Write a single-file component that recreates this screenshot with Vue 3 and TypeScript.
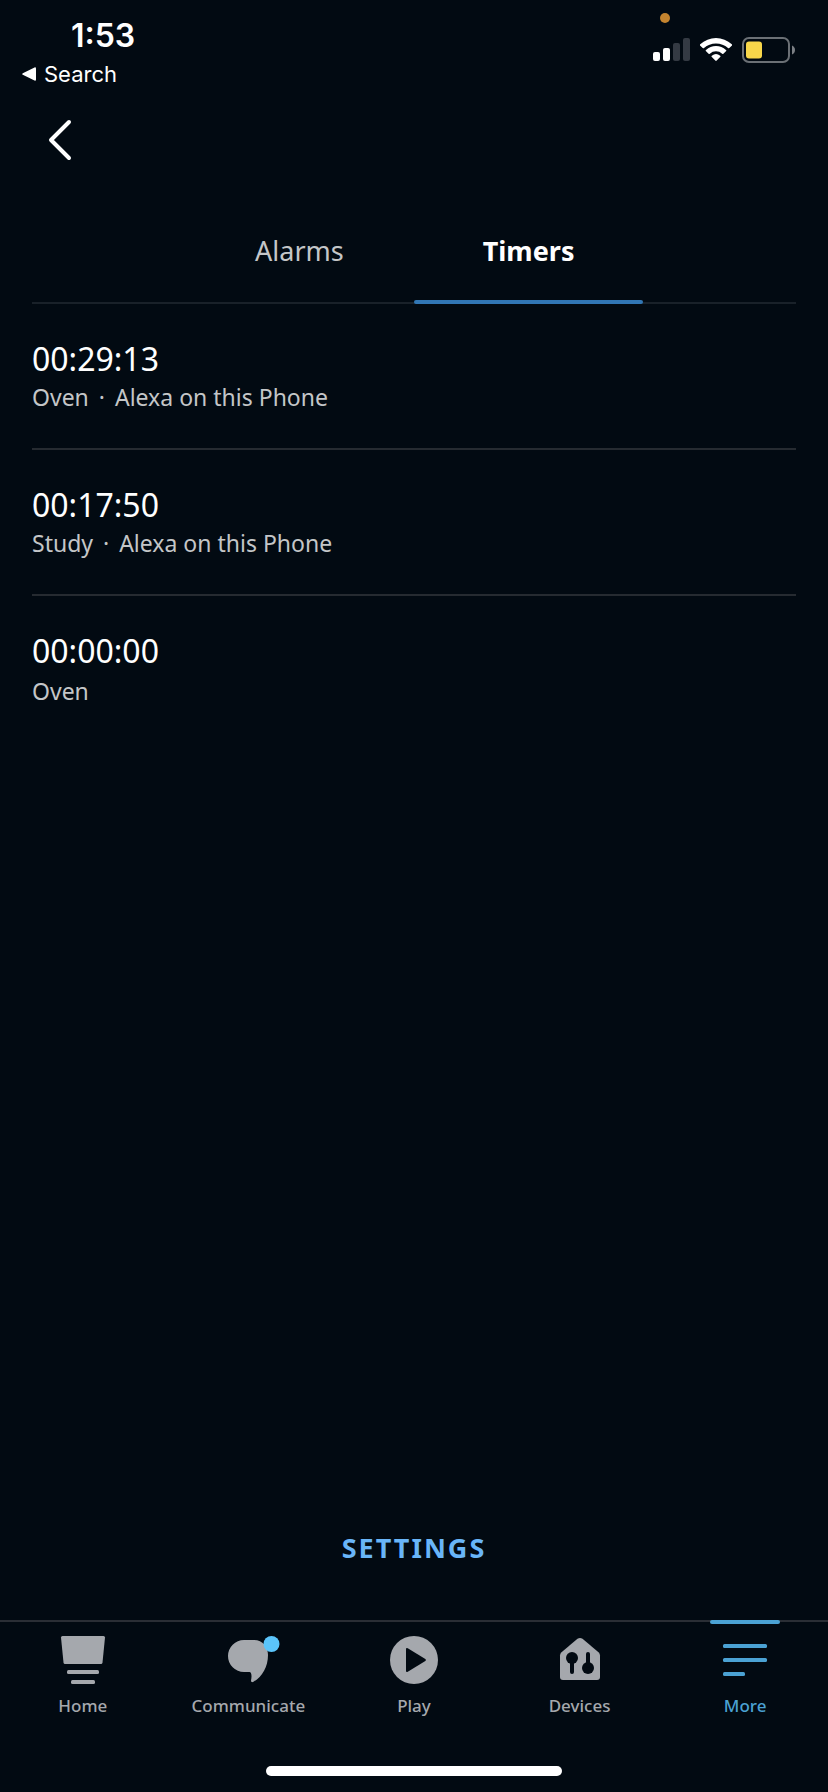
<script setup lang="ts">
import { ref } from 'vue'

interface Timer {
  id: number
  remaining: string
  name: string
  device?: string
}

type NavIcon = 'home' | 'communicate' | 'play' | 'devices' | 'more'

const tabs = ['Alarms', 'Timers']
const activeTab = ref('Timers')

const timers: Timer[] = [
  { id: 1, remaining: '00:29:13', name: 'Oven', device: 'Alexa on this Phone' },
  { id: 2, remaining: '00:17:50', name: 'Study', device: 'Alexa on this Phone' },
  { id: 3, remaining: '00:00:00', name: 'Oven' },
]

const navItems: { label: string; icon: NavIcon }[] = [
  { label: 'Home', icon: 'home' },
  { label: 'Communicate', icon: 'communicate' },
  { label: 'Play', icon: 'play' },
  { label: 'Devices', icon: 'devices' },
  { label: 'More', icon: 'more' },
]
const activeNav = ref('More')
</script>

<template>
  <div class="screen">
    <header class="status">
      <div class="status-left">
        <span class="clock">1:53</span>
        <a class="return" href="#">
          <svg width="14" height="14" viewBox="0 0 14 14" aria-hidden="true">
            <path d="M12.5 .4Q14 0 14 1.5V12.5Q14 14 12.5 13.6L.8 7.8Q-.4 7 .8 6.2Z" fill="#fff" />
          </svg>
          Search
        </a>
      </div>
      <div class="status-right">
        <span class="mic-dot"></span>
        <div class="indicators">
          <svg width="37" height="24" viewBox="0 0 37 24" aria-label="Signal">
            <rect x="0" y="14" width="7" height="9" rx="2" fill="#fff" />
            <rect x="10" y="10" width="7" height="13" rx="2" fill="#fff" />
            <rect x="20" y="5" width="7" height="18" rx="2" fill="#343a43" />
            <rect x="30" y="0" width="7" height="23" rx="2" fill="#343a43" />
          </svg>
          <svg width="32" height="24" viewBox="0 0 32 24" aria-label="Wi-Fi">
            <path d="M0 7.4Q-.4 6.8.2 6.3A23 23 0 0 1 31.8 6.3Q32.4 6.8 32 7.4L29.3 10.1Q28.6 10.6 28 10.1A17.8 17.8 0 0 0 4 10.1Q3.4 10.6 2.7 10.1Z" fill="#fff" />
            <path d="M5.8 13Q5.3 12.4 6 11.9A14.8 14.8 0 0 1 26 11.9Q26.7 12.4 26.2 13L23.4 15.7Q22.8 16.2 22.2 15.7A9.4 9.4 0 0 0 9.8 15.7Q9.2 16.2 8.6 15.7Z" fill="#fff" />
            <path d="M11.6 18.8Q11.1 18.2 11.8 17.7A6.6 6.6 0 0 1 20.2 17.7Q20.9 18.2 20.4 18.8L16.7 22.6Q16 23.2 15.3 22.6Z" fill="#fff" />
          </svg>
          <svg width="53" height="26" viewBox="0 0 53 26" aria-label="Battery">
            <rect x="1" y="1" width="46" height="24" rx="6" fill="none" stroke="#6b7075" stroke-width="2" />
            <rect x="4" y="4.500" width="16" height="17" rx="3" fill="#f8d74a" />
            <path d="M50 8.500Q53 10 53 13T50 17.500Z" fill="#7b7f84" />
          </svg>
        </div>
      </div>
    </header>

    <div class="toolbar">
      <button class="back" type="button" aria-label="Back">
        <svg width="24" height="42" viewBox="0 0 24 42" aria-hidden="true">
          <path d="M21 3L3 21L21 39" fill="none" stroke="#fff" stroke-width="4" stroke-linecap="round" stroke-linejoin="round" />
        </svg>
      </button>
    </div>

    <main class="content">
      <div class="tabs" role="tablist">
        <button
          v-for="tab in tabs"
          :key="tab"
          type="button"
          role="tab"
          class="tab"
          :class="{ active: tab === activeTab }"
          :aria-selected="tab === activeTab"
          @click="activeTab = tab"
        >
          {{ tab }}
        </button>
      </div>

      <ul class="timers">
        <li v-for="timer in timers" :key="timer.id" class="timer">
          <span class="remaining">{{ timer.remaining }}</span>
          <span v-if="timer.device" class="detail">{{ timer.name }} <span class="dot">·</span> {{ timer.device }}</span>
          <span v-else class="detail local">{{ timer.name }}</span>
        </li>
      </ul>

      <button class="settings" type="button">SETTINGS</button>
    </main>

    <nav class="nav">
      <a
        v-for="item in navItems"
        :key="item.label"
        href="#"
        class="nav-item"
        :class="{ active: item.label === activeNav }"
        @click.prevent="activeNav = item.label"
      >
        <svg class="nav-icon" viewBox="0 0 56 48" aria-hidden="true">
          <g v-if="item.icon === 'home'">
            <path d="M7.500 0H48.500Q50 0 50 1.500L47.500 26.500Q47.300 28 46 28H10Q8.700 28 8.500 26.500L6 1.500Q6 0 7.500 0Z" />
            <rect x="12" y="34" width="32" height="4" rx="1.500" />
            <rect x="16" y="44" width="24" height="4" rx="1.500" />
          </g>
          <g v-else-if="item.icon === 'communicate'">
            <path d="M24 4H34C43 4 48 11 48 19C48 31 42 41 33.500 45.700Q31 47 31 44.500C32 40 31.500 36 29.500 36H24A16 16 0 0 1 24 4Z" />
            <circle class="badge" cx="51.500" cy="8" r="8" />
          </g>
          <g v-else-if="item.icon === 'play'">
            <circle cx="28" cy="24" r="24" />
            <path class="hole" d="M20 13.200Q20 11.200 21.800 12.300L39.300 23Q40.700 24 39.300 25L21.800 35.700Q20 36.800 20 34.800Z" />
          </g>
          <g v-else-if="item.icon === 'devices'">
            <path d="M25.500 2.800Q28 1 30.500 2.800L46.500 16.200Q48 17.500 48 19.500V41Q48 44 45 44H11Q8 44 8 41V19.500Q8 17.500 9.500 16.200Z" />
            <circle class="hole" cx="20" cy="22" r="6" />
            <rect class="hole" x="18" y="22" width="4" height="16" rx="2" />
            <circle class="hole" cx="36" cy="32" r="6" />
            <rect class="hole" x="34" y="16" width="4" height="16" rx="2" />
          </g>
          <g v-else>
            <rect x="6" y="8" width="44" height="4" rx="1.500" />
            <rect x="6" y="22" width="44" height="4" rx="1.500" />
            <rect x="6" y="36" width="22" height="4" rx="1.500" />
          </g>
        </svg>
        <span>{{ item.label }}</span>
      </a>
    </nav>

    <div class="home-bar"></div>
  </div>
</template>

<style>
body {
  margin: 0;
  background: #020a12;
}
</style>

<style scoped>
.screen {
  display: flex;
  flex-direction: column;
  min-height: 100vh;
  background: #020a12;
  color: #fff;
  font-family: 'Noto Sans', sans-serif;
}

button {
  padding: 0;
  border: 0;
  background: none;
  color: inherit;
  font: inherit;
  cursor: pointer;
}

a {
  color: inherit;
  text-decoration: none;
}

.status {
  display: flex;
  justify-content: space-between;
  padding: 12px 33px 0 22px;
  font-family: Inter, sans-serif;
}

.status-left {
  display: flex;
  flex-direction: column;
}

.clock {
  padding-left: 49px;
  font-size: 32px;
  font-weight: 600;
  line-height: 48px;
}

.return {
  display: flex;
  align-items: center;
  gap: 8px;
  font-size: 22px;
  line-height: 28px;
}

.status-right {
  display: flex;
  flex-direction: column;
  gap: 14px;
}

.mic-dot {
  width: 10px;
  height: 10px;
  margin-top: 1px;
  margin-left: 7px;
  border-radius: 50%;
  background: #c4842f;
}

.indicators {
  display: flex;
  align-items: center;
  gap: 10px;
}

.toolbar {
  height: 88px;
  padding: 24px 32px 0;
  box-sizing: border-box;
  margin-bottom: 24px;
}

.back {
  display: flex;
  align-items: center;
  justify-content: center;
  width: 56px;
  height: 56px;
}

.content {
  display: flex;
  flex: 1;
  flex-direction: column;
  padding: 0 32px;
}

.tabs {
  display: flex;
  justify-content: center;
  height: 102px;
  border-bottom: 2px solid #192129;
}

.tab {
  position: relative;
  width: 30%;
  color: #c4c6c8;
  font-size: 27px;
  line-height: 40px;
}

.tab.active {
  color: #fff;
  font-weight: 700;
}

.tab.active::after {
  position: absolute;
  right: 0;
  bottom: -2px;
  left: 0;
  height: 4px;
  border-radius: 2px;
  background: #3176b4;
  content: '';
}

.timers {
  margin: 0;
  padding: 0;
  list-style: none;
}

.timer {
  display: flex;
  flex-direction: column;
  padding: 35px 0 33px;
}

.timer + .timer {
  border-top: 2px solid #262b31;
}

.remaining {
  font-size: 32px;
  line-height: 40px;
}

.detail {
  color: #c4c6c8;
  font-size: 23px;
  line-height: 36px;
}

.detail.local {
  line-height: 40px;
}

.dot {
  margin: 0 4px;
}

.settings {
  align-self: center;
  margin-top: auto;
  margin-bottom: 52px;
  color: #69b5f8;
  font-size: 27px;
  font-weight: 700;
  letter-spacing: 2px;
  line-height: 40px;
}

.nav {
  display: flex;
  border-top: 2px solid #2a2e35;
}

.nav-item {
  position: relative;
  display: flex;
  flex: 1;
  flex-direction: column;
  align-items: center;
  gap: 10px;
  padding-top: 14px;
  color: #a5a8ad;
  font-size: 17px;
  font-weight: 500;
  line-height: 24px;
}

.nav-item.active {
  color: #4ba2d4;
}

.nav-item.active::before {
  position: absolute;
  top: -2px;
  width: 70px;
  height: 4px;
  border-radius: 2px;
  background: #4ba2d4;
  content: '';
}

.nav-icon {
  width: 56px;
  height: 48px;
  overflow: visible;
  fill: currentColor;
}

.hole {
  fill: #020a12;
}

.badge {
  fill: #5bc5fb;
}

.home-bar {
  width: 296px;
  height: 10px;
  margin: 48px auto 16px;
  border-radius: 5px;
  background: #fff;
}
</style>
